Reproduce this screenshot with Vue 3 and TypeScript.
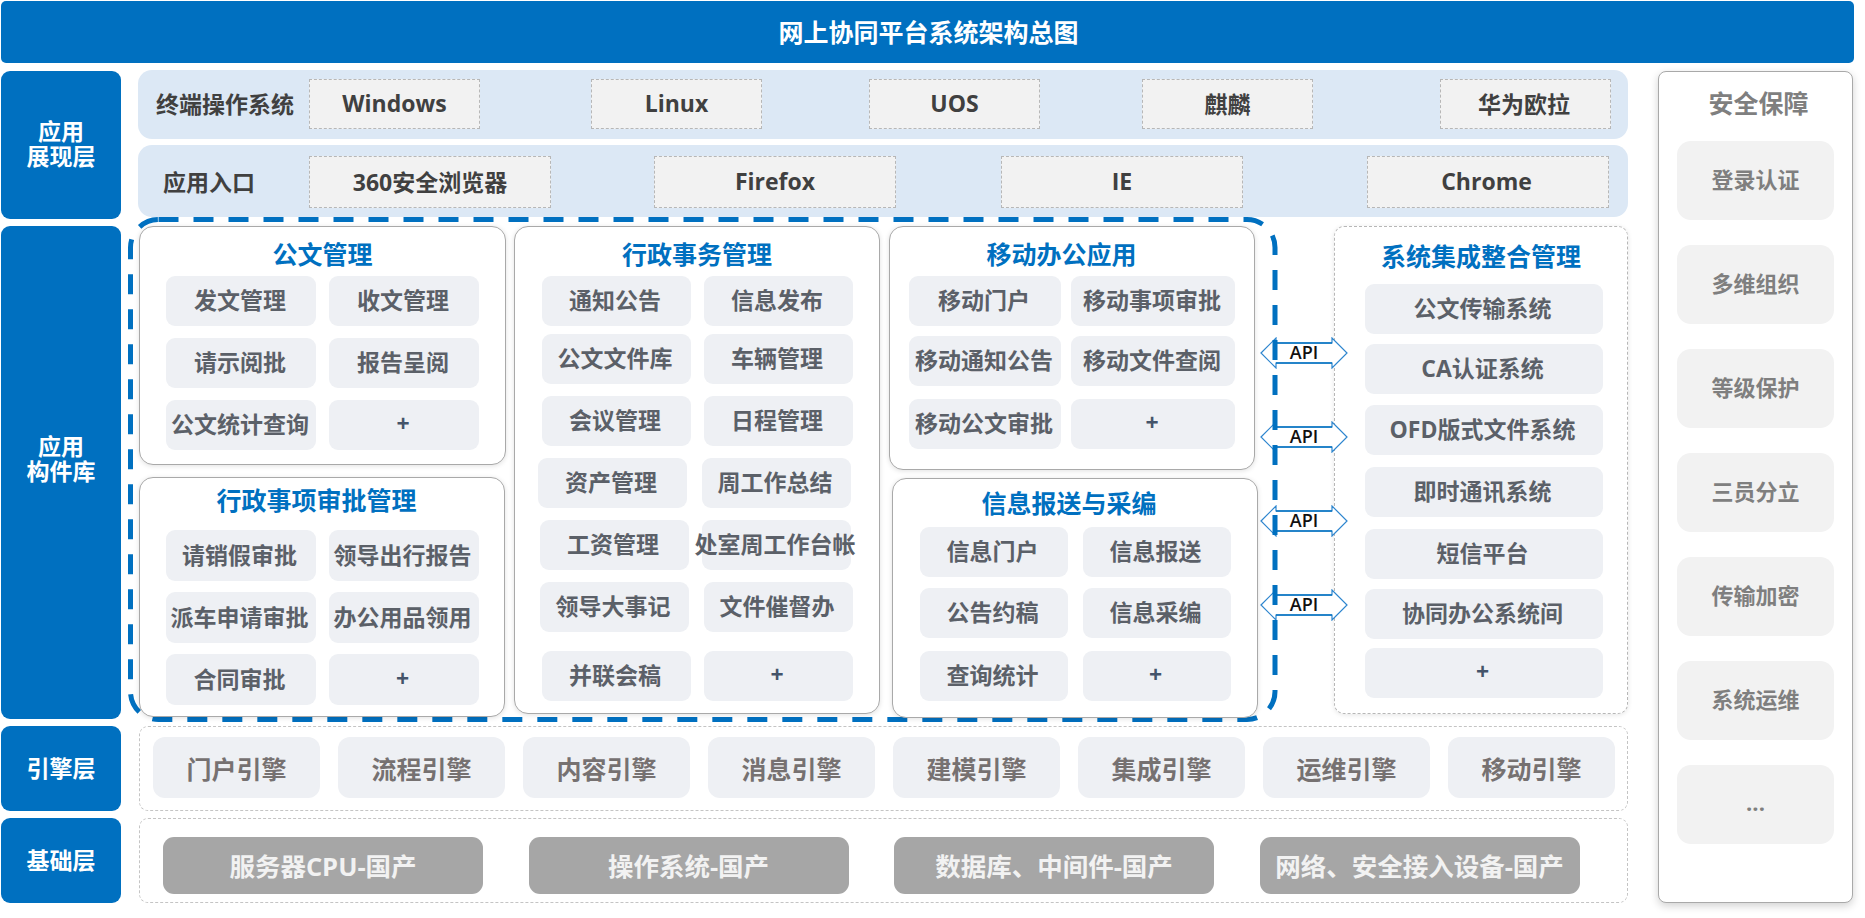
<script setup lang="ts">
interface GapItem {
  label: string
  gap: number
}

const layers = [
  { label: '应用\n展现层', cls: 'layer_show' },
  { label: '应用\n构件库', cls: 'layer_lib' },
  { label: '引擎层', cls: 'layer_engine' },
  { label: '基础层', cls: 'layer_base' },
]

const osList: GapItem[] = [
  { label: 'Windows', gap: 0 },
  { label: 'Linux', gap: 111 },
  { label: 'UOS', gap: 107 },
  { label: '麒麟', gap: 102 },
  { label: '华为欧拉', gap: 127 },
]

const browsers: GapItem[] = [
  { label: '360安全浏览器', gap: 0 },
  { label: 'Firefox', gap: 103 },
  { label: 'IE', gap: 105 },
  { label: 'Chrome', gap: 124 },
]

const docItems = ['发文管理', '收文管理', '请示阅批', '报告呈阅', '公文统计查询', '+']
const approvalItems = ['请销假审批', '领导出行报告', '派车申请审批', '办公用品领用', '合同审批', '+']
const adminItems = [
  '通知公告', '信息发布', '公文文件库', '车辆管理', '会议管理', '日程管理', '资产管理',
  '周工作总结', '工资管理', '处室周工作台帐', '领导大事记', '文件催督办', '并联会稿', '+',
]
const mobileItems = ['移动门户', '移动事项审批', '移动通知公告', '移动文件查阅', '移动公文审批', '+']
const infoItems = ['信息门户', '信息报送', '公告约稿', '信息采编', '查询统计', '+']
const systemItems = ['公文传输系统', 'CA认证系统', 'OFD版式文件系统', '即时通讯系统', '短信平台', '协同办公系统间', '+']
const engines = ['门户引擎', '流程引擎', '内容引擎', '消息引擎', '建模引擎', '集成引擎', '运维引擎', '移动引擎']
const bases = ['服务器CPU-国产', '操作系统-国产', '数据库、中间件-国产', '网络、安全接入设备-国产']
const security = ['登录认证', '多维组织', '等级保护', '三员分立', '传输加密', '系统运维', '...']
</script>

<template>
  <div class="page">
    <div class="header">网上协同平台系统架构总图</div>

    <div class="content">
      <div class="layers">
        <div v-for="layer in layers" :key="layer.cls" class="layer" :class="layer.cls">{{ layer.label }}</div>
      </div>

      <div class="middle">
        <div class="band band_os">
          <div class="band__label">终端操作系统</div>
          <div
              v-for="item in osList"
              :key="item.label"
              class="band__box"
              :style="{ marginLeft: `${item.gap}px` }"
          >{{ item.label }}</div>
        </div>

        <div class="band band_entry">
          <div class="band__label">应用入口</div>
          <div
              v-for="item in browsers"
              :key="item.label"
              class="band__box"
              :style="{ marginLeft: `${item.gap}px` }"
          >{{ item.label }}</div>
        </div>

        <div class="main">
          <svg class="main__dash" width="1150" height="506" viewBox="0 0 1150 506">
            <rect x="2.5" y="2.5" width="1144.5" height="500" rx="28" fill="none" stroke="#0070c0"
                  stroke-width="5" stroke-dasharray="20 15"/>
          </svg>

          <div class="main__col main__col_left">
            <section class="card card_doc">
              <h3 class="card__title">公文管理</h3>
              <div class="chips chips_doc">
                <div v-for="item in docItems" :key="item" class="chip">{{ item }}</div>
              </div>
            </section>
            <section class="card card_approval">
              <h3 class="card__title">行政事项审批管理</h3>
              <div class="chips chips_approval">
                <div v-for="item in approvalItems" :key="item" class="chip">{{ item }}</div>
              </div>
            </section>
          </div>

          <section class="card card_admin">
            <h3 class="card__title">行政事务管理</h3>
            <div class="chips chips_admin">
              <div v-for="item in adminItems" :key="item" class="chip">{{ item }}</div>
            </div>
          </section>

          <div class="main__col main__col_right">
            <section class="card card_mobile">
              <h3 class="card__title">移动办公应用</h3>
              <div class="chips chips_mobile">
                <div v-for="item in mobileItems" :key="item" class="chip">{{ item }}</div>
              </div>
            </section>
            <section class="card card_info">
              <h3 class="card__title">信息报送与采编</h3>
              <div class="chips chips_info">
                <div v-for="item in infoItems" :key="item" class="chip">{{ item }}</div>
              </div>
            </section>
          </div>

          <div class="apis">
            <div v-for="n in 4" :key="n" class="api">
              <svg width="88" height="32" viewBox="0 0 88 32">
                <path d="M1 16 L16 1 V6 H72 V1 L87 16 L72 31 V26 H16 V31 Z" fill="#fff" stroke="#2e86cf" stroke-width="1.2"/>
                <path d="M16 6 H72 M16 26 H72" stroke="#0070c0" stroke-width="1.4"/>
              </svg>
              <span class="api__text">API</span>
            </div>
          </div>

          <section class="system">
            <h3 class="card__title">系统集成整合管理</h3>
            <div class="chips chips_system">
              <div v-for="item in systemItems" :key="item" class="chip">{{ item }}</div>
            </div>
          </section>
        </div>

        <div class="engines">
          <div v-for="item in engines" :key="item" class="engine">{{ item }}</div>
        </div>

        <div class="bases">
          <div v-for="item in bases" :key="item" class="base">{{ item }}</div>
        </div>
      </div>

      <aside class="security">
        <div class="security__title">安全保障</div>
        <div v-for="item in security" :key="item" class="security__item">{{ item }}</div>
      </aside>
    </div>
  </div>
</template>

<style scoped>
.page {
  width: 1865px;
  height: 918px;
  padding: 1px 0 0 1px;
  box-sizing: border-box;
  overflow: hidden;
  background: #fff;
  font-family: "Open Sans", "Noto Sans CJK SC", sans-serif;
  font-weight: 700;
}

.header {
  box-sizing: border-box;
  width: 1853px;
  height: 62px;
  margin-bottom: 7px;
  padding-left: 2px;
  border-radius: 5px;
  background: #0070c0;
  color: #fff;
  font-size: 25px;
  line-height: 62px;
  text-align: center;
}

.content {
  display: flex;
}

.layers {
  display: flex;
  flex-direction: column;
  gap: 7px;
  width: 120px;
  margin: 1px 17px 0 0;
}

.layer {
  display: flex;
  align-items: center;
  justify-content: center;
  border-radius: 9px;
  background: #0070c0;
  color: #fff;
  font-size: 23px;
  line-height: 25px;
  text-align: center;
  white-space: pre-line;
}

.layer_show { height: 148px; padding-bottom: 2px; box-sizing: border-box; }
.layer_lib { height: 493px; padding-bottom: 28px; box-sizing: border-box; }
.layer_engine { height: 85px; }
.layer_base { height: 85px; }

.middle {
  width: 1490px;
}

.band {
  display: flex;
  border-radius: 14px;
  background: #dce8f5;
  color: #404040;
  font-size: 23px;
}

.band__label {
  align-self: center;
  box-sizing: border-box;
  white-space: nowrap;
}

.band__box {
  display: flex;
  align-items: center;
  justify-content: center;
  box-sizing: border-box;
  padding-bottom: 3px;
  border: 1px dashed #b7b7b7;
  background: #f2f2f2;
}

.band__box:last-child {
  padding-right: 3px;
}

.band_os {
  height: 69px;
  margin-bottom: 6px;
  padding-top: 9px;
  box-sizing: border-box;
}

.band_os .band__label {
  width: 171px;
  margin-top: -12px;
  padding-left: 18px;
}

.band_os .band__box {
  width: 171px;
  height: 50px;
}

.band_entry {
  height: 72px;
  margin-bottom: 9px;
  padding-top: 11px;
  box-sizing: border-box;
}

.band_entry .band__label {
  width: 171px;
  margin-top: -12px;
  padding-left: 25px;
}

.band_entry .band__box {
  width: 242px;
  height: 52px;
}

.main {
  position: relative;
  display: flex;
  height: 493px;
  margin-bottom: 7px;
}

.main__dash {
  position: absolute;
  top: -9px;
  left: -10px;
  z-index: 1;
}

.main__col {
  display: flex;
  flex: none;
  flex-direction: column;
}

.main__col_left {
  width: 368px;
  gap: 12px;
  margin-right: 8px;
}

.main__col_right {
  width: 369px;
  gap: 8px;
  margin-left: 9px;
}

.card {
  position: relative;
  z-index: 2;
  box-sizing: border-box;
  border: 1px solid #a9a9a9;
  border-radius: 14px;
  background: #fff;
  box-shadow: 0 1px 5px rgba(0, 0, 0, 0.12);
}

.card__title {
  margin: 0;
  color: #0070c0;
  font-size: 25px;
  font-weight: 700;
  line-height: 34px;
  text-align: center;
}

.card_doc {
  height: 239px;
  margin-left: 1px;
  padding-top: 10px;
}

.card_approval {
  height: 240px;
  margin: 0 1px 0 1px;
  padding-top: 5px;
}

.card_approval .card__title {
  padding-right: 11px;
}

.card_admin {
  flex: none;
  width: 366px;
  height: 488px;
  padding-top: 10px;
}

.card_mobile {
  width: 366px;
  height: 244px;
  padding-top: 10px;
}

.card_mobile .card__title {
  padding-right: 21px;
}

.card_info {
  width: 366px;
  height: 240px;
  margin-left: 3px;
  padding-top: 7px;
}

.card_info .card__title {
  padding-right: 12px;
}

.chips {
  display: grid;
  justify-content: center;
  align-items: end;
}

.chip {
  display: flex;
  align-items: center;
  justify-content: center;
  box-sizing: border-box;
  height: 50px;
  padding: 0 2px 4px 0;
  border-radius: 9px;
  background: #eef0f4;
  color: #5b6068;
  font-size: 23px;
  white-space: nowrap;
}

.chip:last-child {
  color: #44546a;
}

.chips_doc {
  grid-template-columns: 150px 150px;
  column-gap: 13px;
  row-gap: 12px;
  margin-top: 5px;
}

.chips_approval {
  grid-template-columns: 150px 150px;
  column-gap: 13px;
  row-gap: 11px;
  margin-top: 13px;
}

.chips_approval .chip {
  height: 51px;
}

.chips_admin {
  grid-template-columns: 149px 149px;
  grid-template-rows: 50px 50px 54px 54px 54px 54px 61px;
  column-gap: 13px;
  row-gap: 8px;
  margin-top: 5px;
}

/* rows 4-6 sit slightly to the left in the source drawing */
.chips_admin .chip:nth-child(7) {
  margin: 0 4px 0 -4px;
}

.chips_admin .chip:nth-child(8),
.chips_admin .chip:nth-child(9),
.chips_admin .chip:nth-child(10),
.chips_admin .chip:nth-child(11) {
  margin: 0 2px 0 -2px;
}

.chips_mobile {
  grid-template-columns: 152px 164px;
  grid-template-rows: 50px 50px 53px;
  column-gap: 10px;
  row-gap: 10px;
  margin-top: 5px;
}

.chips_info {
  grid-template-columns: 148px 148px;
  grid-template-rows: 50px 50px 52px;
  column-gap: 15px;
  row-gap: 11px;
  margin-top: 7px;
}

.apis {
  position: absolute;
  top: 111px;
  left: 1122px;
  display: flex;
  flex-direction: column;
  gap: 52px;
}

.api {
  position: relative;
  width: 88px;
  height: 32px;
}

.api svg {
  display: block;
}

.api__text {
  position: absolute;
  inset: 0;
  color: #111;
  font-size: 18px;
  font-weight: 600;
  line-height: 31px;
  text-align: center;
}

.system {
  box-sizing: border-box;
  flex: none;
  width: 294px;
  height: 488px;
  margin-left: 76px;
  padding-top: 12px;
  border: 1px dashed #b7b7b7;
  border-radius: 10px;
  background: #fff;
  box-shadow: 0 1px 5px rgba(0, 0, 0, 0.1);
}

.chips_system {
  grid-template-columns: 238px;
  grid-template-rows: 50px 51px 52px 53px 53px 51px 50px;
  row-gap: 9px;
  margin-top: 11px;
  padding-left: 5px;
}

.engines {
  display: flex;
  gap: 18px;
  box-sizing: border-box;
  height: 85px;
  margin: 0 0 7px 1px;
  padding: 10px 0 0 13px;
  border: 1px dashed #c4c4c4;
  border-radius: 9px;
}

.engine {
  display: flex;
  align-items: center;
  justify-content: center;
  width: 167px;
  height: 61px;
  border-radius: 12px;
  background: #eef0f4;
  color: #767171;
  font-size: 25px;
}

.bases {
  display: flex;
  gap: 45.5px;
  box-sizing: border-box;
  height: 85px;
  margin-left: 1px;
  padding: 18px 0 0 23px;
  border: 1px dashed #c4c4c4;
  border-radius: 9px;
}

.base {
  display: flex;
  align-items: center;
  justify-content: center;
  box-sizing: border-box;
  width: 320px;
  height: 57px;
  padding-bottom: 3px;
  border-radius: 11px;
  background: #a6a6a6;
  color: #f2f2f2;
  font-size: 25.5px;
  white-space: nowrap;
}

.security {
  box-sizing: border-box;
  display: flex;
  flex-direction: column;
  align-items: center;
  gap: 25px;
  width: 195px;
  height: 832px;
  margin: 1px 0 0 30px;
  border: 1px solid #a9a9a9;
  border-radius: 8px;
  background: #fff;
  box-shadow: 0 3px 8px rgba(0, 0, 0, 0.18);
  color: #7f7f7f;
}

.security__title {
  height: 29px;
  padding: 14px 0 1px 6px;
  font-size: 25px;
  line-height: 34px;
}

.security__item {
  display: flex;
  align-items: center;
  justify-content: center;
  box-sizing: border-box;
  flex: none;
  width: 157px;
  height: 79px;
  padding-bottom: 5px;
  border-radius: 14px;
  background: #f2f2f2;
  font-size: 22px;
}
</style>
